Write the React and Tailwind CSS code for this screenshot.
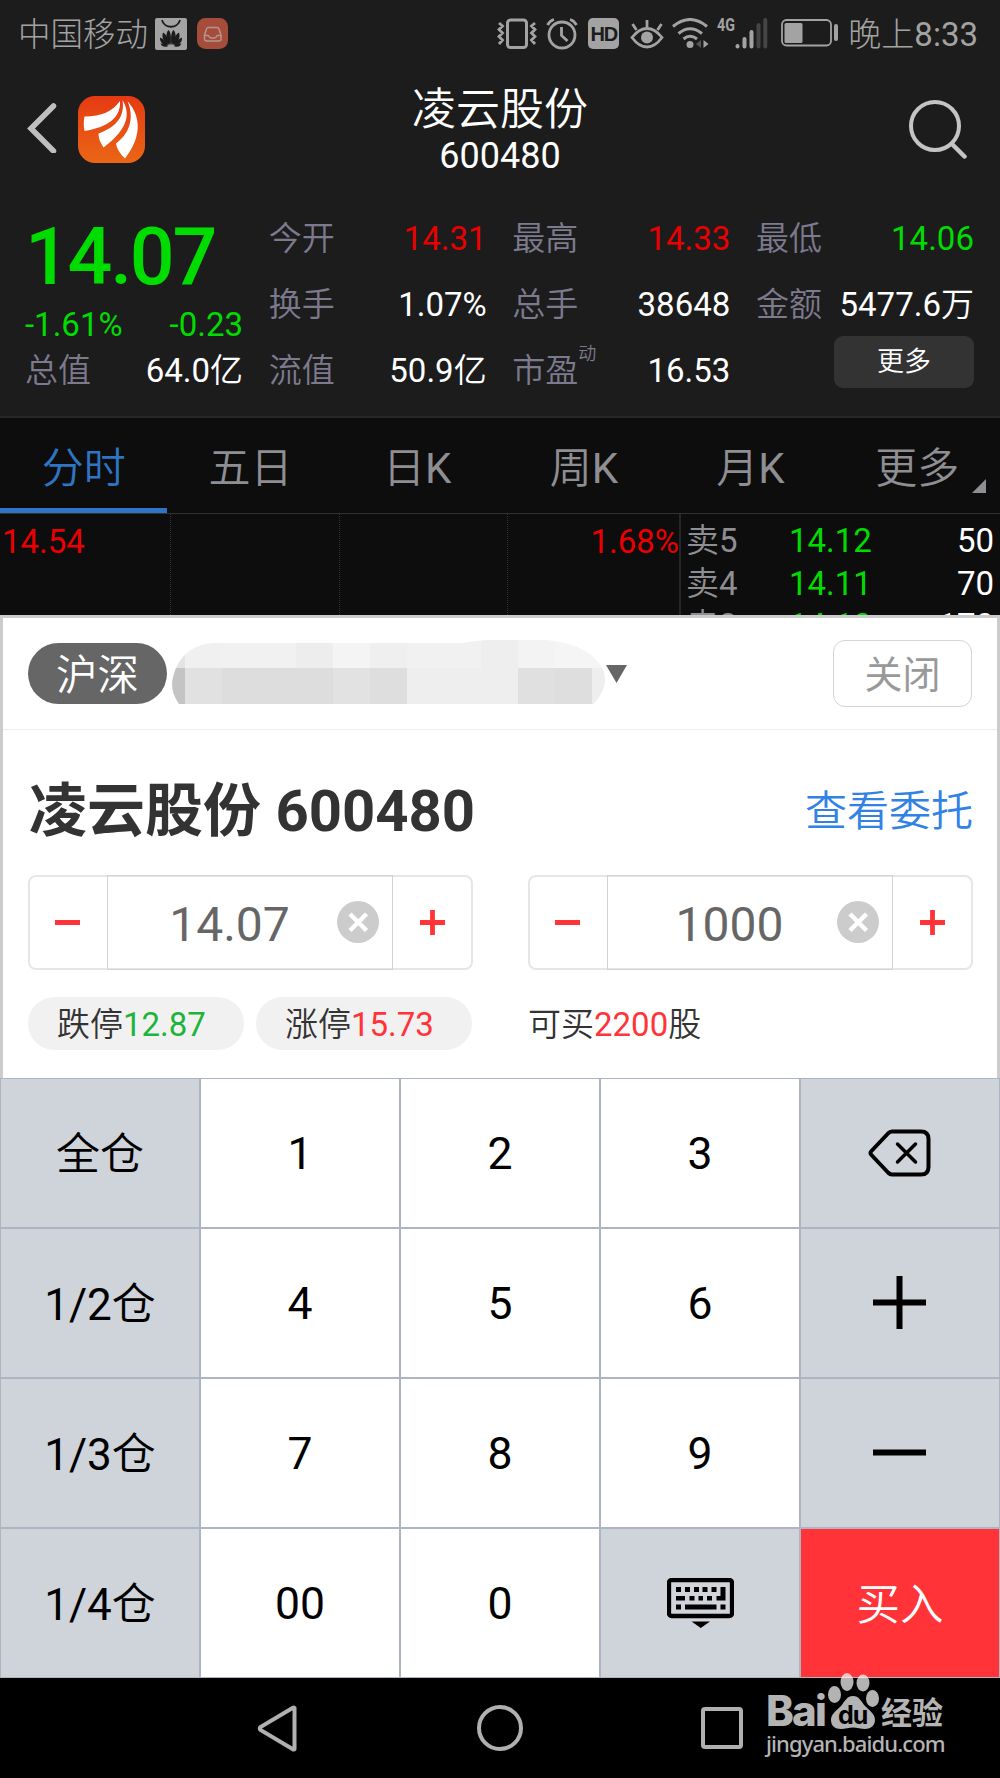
import React, { useState } from 'react';
import clsx from 'clsx';

const tabs = ['分时', '五日', '日K', '周K', '月K', '更多'];

const quoteColumns = [
  [
    { label: '今开', value: '14.31', color: 'text-[#ea0000]' },
    { label: '换手', value: '1.07%', color: 'text-white' },
    { label: '流值', value: '50.9', unit: '亿', color: 'text-white' },
  ],
  [
    { label: '最高', value: '14.33', color: 'text-[#ea0000]' },
    { label: '总手', value: '38648', color: 'text-white' },
    { label: '市盈', sup: '动', value: '16.53', color: 'text-white' },
  ],
  [
    { label: '最低', value: '14.06', color: 'text-[#00dc00]' },
    { label: '金额', value: '5477.6', unit: '万', color: 'text-white' },
  ],
];

const asks = [
  { level: '5', price: '14.12', volume: '50' },
  { level: '4', price: '14.11', volume: '70' },
  { level: '3', price: '14.10', volume: '170' },
];

// Chinese text is set a touch thinner than the digits beside it
const Cn = ({ children }) => <span className="font-[350]">{children}</span>;

const StatusBar = () => (
  <div className="flex h-[66px] items-start justify-between pl-[18px] pr-[22px] pt-[17px] text-[#a3a3a3]">
    <div className="flex items-start">
      <span className="pt-px text-[32.5px] leading-[35px] font-light">中国移动</span>
      <svg width="32" height="32" viewBox="0 0 32 32" className="ml-[7px] mt-px">
        <rect width="32" height="32" rx="2" fill="#a3a3a3" />
        <path d="M7 2 C9 11 23 11 25 2" fill="none" stroke="#1c1c1c" strokeWidth="1.8" />
        <g fill="#1c1c1c">
          <path d="M15.5 27 C10.5 22 10.5 15 13.5 12 C16 14 16.5 21 15.5 27Z" />
          <path d="M16.5 27 C21.5 22 21.5 15 18.5 12 C16 14 15.5 21 16.5 27Z" />
          <path d="M14.5 27 C8 24 6.5 19 8 14.5 C12 17 14 22 14.5 27Z" />
          <path d="M17.5 27 C24 24 25.5 19 24 14.5 C20 17 18 22 17.5 27Z" />
          <path d="M13.5 27.5 C8 27.5 4.5 24 5 19.5 C9 21 12 24 13.5 27.5Z" />
          <path d="M18.5 27.5 C24 27.5 27.5 24 27 19.5 C23 21 20 24 18.5 27.5Z" />
          <path d="M13 28.2 C9 29.5 7 28.5 5.5 25.5 C8.5 25.5 11 26.5 13 28.2Z" />
          <path d="M19 28.2 C23 29.5 25 28.5 26.5 25.5 C23.5 25.5 21 26.5 19 28.2Z" />
        </g>
      </svg>
      <svg width="31" height="31" viewBox="0 0 31 31" className="ml-[10px] mt-px">
        <rect width="31" height="31" rx="8.5" fill="#a54c3b" />
        <path
          d="M11 9.5 H20 Q21.5 9.5 22 11 L24 17 V21 Q24 23 22 23 H9.5 Q7.5 23 7.5 21 V17 L9.5 11 Q10 9.5 11 9.5Z M7.5 17.5 H11.5 Q12.5 20 14 20 H17.5 Q19 20 20 17.5 H24"
          fill="none" stroke="#b3968e" strokeWidth="1.5" strokeLinejoin="round"
        />
      </svg>
    </div>

    <div className="flex items-start">
      {/* vibrate */}
      <svg width="40" height="32" viewBox="0 0 40 32" className="mt-px" fill="none" stroke="#a3a3a3">
        <rect x="10.5" y="2" width="19" height="27.5" rx="3" strokeWidth="3" />
        <path d="M2 5 L5.5 8 L2 11.5 L5.5 15 L2 18.5 L5.5 22 L2 26 M38 5 L34.5 8 L38 11.5 L34.5 15 L38 18.5 L34.5 22 L38 26" strokeWidth="2.8" />
      </svg>
      {/* alarm */}
      <svg width="32" height="32" viewBox="0 0 32 32" className="ml-[9px] mt-px" fill="none" stroke="#a3a3a3" strokeWidth="2.8">
        <circle cx="16" cy="17" r="13" />
        <path d="M1.5 7 Q4 2.5 8 1.5 M30.5 7 Q28 2.5 24 1.5 M15.5 9 V17.5 L21.5 23" />
      </svg>
      <span className="ml-[10px] mt-px flex h-[31px] w-[31px] items-center justify-center rounded-[5px] bg-[#a3a3a3] font-['Liberation_Sans'] text-[20px] leading-none font-bold tracking-[-1px] text-[#1c1c1c]">
        HD
      </span>
      {/* eye comfort */}
      <svg width="34" height="32" viewBox="0 0 34 32" className="ml-[11px] mt-px" fill="none" stroke="#a3a3a3" strokeWidth="2.8">
        <path d="M2 19.5 Q9 10.5 17 10.5 T32 19.5 Q25 29 17 29 T2 19.5Z M17 2 V10 M2.5 6 L6.5 12 M31.5 6 L27.5 12" />
        <circle cx="17" cy="19.5" r="6" fill="#a3a3a3" stroke="none" />
      </svg>
      {/* wifi */}
      <svg width="37" height="32" viewBox="0 0 37 32" className="ml-[8px] mt-px" fill="none" stroke="#a3a3a3" strokeWidth="3">
        <path d="M1 8.500 Q18 -5.500 35 8.500 M6.500 15.500 Q18 6 30 15.500 M11.500 21 Q18 15.500 25 21" />
        <circle cx="18" cy="26.5" r="3.5" fill="#a3a3a3" stroke="none" />
        <path d="M29 22 V30 L24 26Z" fill="#555" stroke="none" />
        <path d="M31.5 22 V30 L36.5 26Z" fill="#a3a3a3" stroke="none" />
      </svg>
      <span className="ml-[8px] font-['Roboto'] text-[19px] leading-[16px] font-bold">
        <span className="inline-block w-[18px] origin-left scale-x-75">4G</span>
      </span>
      <svg width="33" height="32" viewBox="0 0 33 32" className="mt-px" strokeWidth="4" strokeLinecap="round">
        <path d="M2.5 28 V28.5 M9.5 21 V28.5 M16.5 14 V28.5" stroke="#a3a3a3" />
        <path d="M23.5 7 V28.5 M30.3 2 V28.5" stroke="#454545" />
      </svg>
      <svg width="57" height="28" viewBox="0 0 57 28" className="ml-[13px] mt-[2px]">
        <rect x="1" y="1" width="49" height="25.5" rx="4.5" fill="none" stroke="#a3a3a3" strokeWidth="1.8" />
        <rect x="3.5" y="4" width="18" height="20" rx="1.5" fill="#a3a3a3" />
        <rect x="53" y="5" width="4" height="17" rx="2" fill="#a3a3a3" />
      </svg>
      <span className="ml-[10px] text-[33px] leading-[36px] font-light">
        晚上<span className="font-normal">8:33</span>
      </span>
    </div>
  </div>
);

const Header = () => (
  <div className="flex h-[118px] items-start justify-between px-[27px]">
    <div className="flex w-[160px] items-start pt-[30px]">
      <svg width="30" height="50" viewBox="0 0 30 50" className="mt-[7px]">
        <path d="M26.5 3 L4 25.5 L26.5 48" fill="none" stroke="#bfbfbf" strokeWidth="5.5" strokeLinecap="round" />
      </svg>
      <svg width="67" height="67" viewBox="0 0 67 67" className="ml-[21px]">
        <defs>
          <linearGradient id="logo-bg" x1="0" y1="0" x2="0" y2="1">
            <stop offset="0" stopColor="#e63a12" />
            <stop offset="1" stopColor="#ea6615" />
          </linearGradient>
        </defs>
        <rect width="67" height="67" rx="17" fill="url(#logo-bg)" />
        <g fill="#fff">
          <path d="M42 5 C43 21 31 31 6.5 35 Q5 27 6.5 20.5 C24 20 34 16 42 5Z" />
          <path d="M44.5 4 C55 21 45 37 25.5 51.5 Q20 43 20.5 37.5 C39 31 47 20 44.5 4Z" />
          <path d="M49.5 5 C65 23 62 43 47 62.5 Q39 55 38 47.5 C52 37 56.5 22 49.5 5Z" />
        </g>
      </svg>
    </div>
    <div className="flex flex-col items-center gap-[6px] pt-[22px] text-white">
      <h1 className="text-[44px] leading-[44px] font-[350]">凌云股份</h1>
      <p className="text-[36px] leading-[36px]">600480</p>
    </div>
    <div className="flex w-[160px] justify-end pt-[34px] pr-[6px]">
      <svg width="58" height="59" viewBox="0 0 58 59" fill="none" stroke="#c4c4c4" strokeWidth="4">
        <circle cx="26" cy="26" r="24" />
        <path d="M43 44 L55.5 56.5" strokeWidth="4.5" strokeLinecap="round" />
      </svg>
    </div>
  </div>
);

const Quote = () => (
  <div className="flex h-[234px] justify-between border-b-2 border-[#262626] pt-[21px] pr-[26px] pl-[25px] text-[33px] leading-[33px]">
    <div className="flex w-[218px] flex-col pt-px text-[#00dc00]">
      <div className="flex h-[102px] items-center text-[79px] leading-[79px] font-medium tracking-[-2.3px]">14.07</div>
      <div className="flex h-[33px] items-center justify-between">
        <span>-1.61%</span>
        <span>-0.23</span>
      </div>
      <div className="flex h-[59px] items-center justify-between">
        <span className="font-[350] text-[#7d7a8e]">总值</span>
        <span className="text-white">64.0<Cn>亿</Cn></span>
      </div>
    </div>
    {quoteColumns.map((column, index) => (
      <div key={index} className="flex w-[218px] flex-col">
        {column.map((item) => (
          <div key={item.label} className="flex h-[66px] items-center justify-between">
            <span className="flex font-[350] whitespace-nowrap text-[#7d7a8e]">
              {item.label}
              {item.sup && <sup className="top-0 -mt-[10px] text-[18px] leading-[19px]">{item.sup}</sup>}
            </span>
            <span className={clsx('whitespace-nowrap', item.color)}>
              {item.value}
              {item.unit && <Cn>{item.unit}</Cn>}
            </span>
          </div>
        ))}
        {column.length === 2 && (
          <button className="-mt-px h-[52px] w-[140px] self-end rounded-[9px] bg-[#333] pt-px text-[27px] leading-[27px] font-[350] text-white">
            更多
          </button>
        )}
      </div>
    ))}
  </div>
);

const Tabs = () => {
  const [active, setActive] = useState('分时');

  return (
    <div className="grid h-[96px] grid-cols-6 border-b border-[#303030] bg-[#0d0d0d]">
      {tabs.map((tab) => (
        <button
          key={tab}
          onClick={() => setActive(tab)}
          className={clsx(
            'relative border-b-5 pt-[11px] pl-px text-[42px] leading-[76px]',
            active === tab ? 'border-[#2f75c5] text-[#2f75c5]' : 'border-transparent text-[#8e8e93]'
          )}
        >
          <Cn>{tab.replace('K', '')}</Cn>
          {tab.endsWith('K') && 'K'}
          {tab === '更多' && (
            <svg width="14" height="14" viewBox="0 0 14 14" className="absolute right-[14px] bottom-[15px]">
              <path d="M14 0 V14 H0Z" fill="#8e8e93" />
            </svg>
          )}
        </button>
      ))}
    </div>
  );
};

const Chart = () => (
  <div className="flex h-[101px] overflow-hidden bg-[#0d0d0d] text-[33px] leading-[43px]">
    <div className="flex w-[681px] border-r-2 border-[#262626]">
      <div className="w-[171px] border-r border-dotted border-[#333] pt-[6px] pl-[2px] text-[#ea0000]">14.54</div>
      <div className="w-[169px] border-r border-dotted border-[#333]" />
      <div className="w-[168px] border-r border-dotted border-[#333]" />
      <div className="flex-1 pt-[6px] text-right text-[#ea0000]">1.68%</div>
    </div>
    <div className="flex-1 pt-[5px] pr-[6px] pl-[5px]">
      {asks.map((ask) => (
        <div key={ask.level} className="flex h-[42.5px]">
          <span className="w-[103px] text-[#8e8e93]"><Cn>卖</Cn>{ask.level}</span>
          <span className="flex-1 text-[#00dc00]">{ask.price}</span>
          <span className="text-white">{ask.volume}</span>
        </div>
      ))}
    </div>
  </div>
);

// hidden account number
const MaskedAccount = () => (
  <svg width="433" height="67" viewBox="0 0 433 67" className="ml-[5px]">
    <defs>
      <clipPath id="mask-shape">
        <path d="M7 64 Q0 54 0 44 C3 18 20 3 45 3 H290 Q305 0 320 0 H365 C405 0 433 18 433 40 Q432 54 421 64Z" />
      </clipPath>
    </defs>
    <g clipPath="url(#mask-shape)" shapeRendering="crispEdges">
      <rect width="433" height="67" fill="#f1f1f1" />
      <rect width="13" height="28" fill="#e4e4e4" />
      <rect x="13" width="37" height="28" fill="#f0f0f0" />
      <rect x="124" width="37" height="28" fill="#ededed" />
      <rect x="161" width="37" height="28" fill="#f4f4f4" />
      <rect x="198" width="37" height="28" fill="#efefef" />
      <rect x="309" width="37" height="28" fill="#eeeeee" />
      <rect x="346" width="37" height="28" fill="#f3f3f3" />
      <rect x="383" width="50" height="28" fill="#f5f5f5" />
      <rect y="28" width="13" height="37" fill="#c4c4c4" />
      <rect x="13" y="28" width="37" height="37" fill="#e1e1e1" />
      <rect x="50" y="28" width="111" height="37" fill="#dddddd" />
      <rect x="161" y="28" width="37" height="37" fill="#e2e2e2" />
      <rect x="198" y="28" width="37" height="37" fill="#dedede" />
      <rect x="235" y="28" width="111" height="37" fill="#eeeeee" />
      <rect x="346" y="28" width="37" height="37" fill="#e0e0e0" />
      <rect x="383" y="28" width="37" height="37" fill="#dedede" />
      <rect x="420" y="28" width="13" height="37" fill="#eeeeee" />
    </g>
  </svg>
);

const Stepper = ({ value }) => (
  <div className="flex h-[95px] w-[445px] rounded-[8px] border-2 border-[#e6e6e6]">
    <button className="flex w-[77px] items-center justify-center pr-[2px]">
      <svg width="25" height="25" viewBox="0 0 25 25">
        <path d="M0 12.5 H25" stroke="#ff3338" strokeWidth="5" />
      </svg>
    </button>
    <div className="-my-[2px] flex w-[286px] items-center border border-[#d2d2d2] pr-[13px] pb-px pl-[14px]">
      <span className="flex-1 pt-[5px] text-center text-[48px] leading-[48px] text-[#666]">{value}</span>
      <svg width="42" height="42" viewBox="0 0 42 42">
        <circle cx="21" cy="21" r="21" fill="#ccc" />
        <path d="M13 13 L29.5 29.5 M29.5 13 L13 29.5" stroke="#fff" strokeWidth="4.500" />
      </svg>
    </div>
    <button className="flex flex-1 items-center justify-center">
      <svg width="25" height="25" viewBox="0 0 25 25">
        <path d="M0 12.5 H25 M12.5 0 V25" stroke="#ff3338" strokeWidth="4.8" />
      </svg>
    </button>
  </div>
);

const OrderPanel = () => (
  <section className="h-[463px] border-x-3 border-t-3 border-[#ccc] bg-white">
    <div className="flex h-[112px] items-center border-b border-[#eee] px-[25px]">
      <span className="flex h-[61px] w-[139px] items-center justify-center rounded-[31px] bg-[#666] pt-[4px] text-[41.5px] leading-none font-[350] text-white">
        沪深
      </span>
      <MaskedAccount />
      <svg width="21" height="18" viewBox="0 0 21 18" className="ml-px">
        <path d="M0 0 H21 L10.5 18Z" fill="#666" />
      </svg>
      <button className="ml-auto h-[67px] w-[139px] rounded-[12px] border border-[#d4d4d4] pt-[3px] text-[38px] leading-none text-[#999]">
        关闭
      </button>
    </div>
    <div className="flex h-[145px] items-center justify-between pt-[16px] pr-[24px] pl-[26px]">
      <h2 className="text-[58px] leading-[58px] font-bold text-[#333]">凌云股份 600480</h2>
      <span className="pt-[2px] text-[42px] leading-[42px] font-[350] text-[#3282e6]">查看委托</span>
    </div>
    <div className="flex justify-between pr-[24px] pl-[25px]">
      <Stepper value="14.07" />
      <Stepper value="1000" />
    </div>
    <div className="mt-[27px] flex px-[25px] text-[33px] leading-[56px] text-[#333]">
      <span className="h-[53px] w-[216px] rounded-full bg-[#f1f1f1] pl-[29px]">
        <Cn>跌停</Cn><span className="text-[#1eb43c]">12.87</span>
      </span>
      <span className="ml-[12px] h-[53px] w-[216px] rounded-full bg-[#f1f1f1] pl-[29px]">
        <Cn>涨停</Cn><span className="text-[#ff3338]">15.73</span>
      </span>
      <span className="ml-[56px]">
        <Cn>可买</Cn><span className="text-[#ff3338]">2200</span><Cn>股</Cn>
      </span>
    </div>
  </section>
);

const BackspaceIcon = () => (
  <svg width="63" height="48" viewBox="0 0 63 48" className="mr-[2px] mb-px" fill="none" stroke="#000" strokeLinecap="round" strokeLinejoin="round">
    <path d="M24 2.5 H53 Q60.5 2.5 60.5 10 V38 Q60.5 45.5 53 45.5 H24 Q22 45.5 20 43.5 L3 25.5 Q2 24 3 22.5 L20 4.5 Q22 2.5 24 2.5Z" strokeWidth="4" />
    <path d="M29.5 15 L47.5 33 M47.5 15 L29.5 33" strokeWidth="3.5" />
  </svg>
);

const PlusIcon = () => (
  <svg width="53" height="53" viewBox="0 0 53 53" className="mr-[2px] mb-px">
    <path d="M0 26.5 H53 M26.5 0 V53" stroke="#000" strokeWidth="6" />
  </svg>
);

const MinusIcon = () => (
  <svg width="53" height="53" viewBox="0 0 53 53" className="mr-[2px] mb-px">
    <path d="M0 26.5 H53" stroke="#000" strokeWidth="6" />
  </svg>
);

const KeyboardIcon = () => (
  <svg width="67" height="50" viewBox="0 0 67 50">
    <rect x="2" y="2" width="63" height="36" rx="2.5" fill="none" stroke="#000" strokeWidth="4.3" />
    <path d="M9 9h5v5h-5z M18 9h5v5h-5z M27 9h5v5h-5z M35.5 9h5v5h-5z M44.5 9h5v5h-5z M53.5 9h5v13.5h-9v-4.5h4z M9 18h9v4.5h-9z M22.5 18h5v4.5h-5z M31.5 18h4.5v4.5h-4.5z M40 18h5v4.5h-5z M9 26.5h5v5h-5z M18 26.5h31.5v5h-31.5z M53.5 26.5h5v5h-5z M24.5 43.5h18.5l-9.2 6.5z" />
  </svg>
);

const keys = [
  { cn: '全仓', side: true },
  { label: '1' },
  { label: '2' },
  { label: '3' },
  { icon: BackspaceIcon, side: true },
  { label: '1/2', cn: '仓', side: true },
  { label: '4' },
  { label: '5' },
  { label: '6' },
  { icon: PlusIcon, side: true },
  { label: '1/3', cn: '仓', side: true },
  { label: '7' },
  { label: '8' },
  { label: '9' },
  { icon: MinusIcon, side: true },
  { label: '1/4', cn: '仓', side: true },
  { label: '00' },
  { label: '0' },
  { icon: KeyboardIcon, side: true },
  { cn: '买入', buy: true },
];

const Keypad = () => (
  <div className="grid h-[600px] grid-cols-5 grid-rows-4 text-[44px] leading-[45px] text-black">
    {keys.map((key, index) => (
      <button
        key={index}
        className={clsx(
          'flex items-center justify-center border border-[#aeb5c2]',
          key.buy ? 'bg-[#ff3338] text-[43.5px] text-white' : key.side ? 'bg-[#cfd3da]' : 'bg-white'
        )}
      >
        {key.icon ? (
          <key.icon />
        ) : (
          <span className={clsx(key.cn ? 'pt-[4px]' : 'pt-[2px] text-[44.5px]')}>
            {key.label}
            {key.cn && <Cn>{key.cn}</Cn>}
          </span>
        )}
      </button>
    ))}
  </div>
);

const Watermark = () => (
  <div className="absolute top-[1671px] left-[766px] h-[90px] w-[180px] text-[#b4b4b4]">
    <div className="flex items-end">
      <span className="w-[61px] font-['Inter'] text-[42px] leading-[36px] font-extrabold tracking-[-1.8px]">Bai</span>
      <div className="relative h-[58px] w-[52px]">
        <svg width="52" height="58" viewBox="0 0 52 58" fill="#fff" fillOpacity="0.7">
          <ellipse cx="7.500" cy="23.500" rx="6.500" ry="8.500" />
          <ellipse cx="20" cy="11" rx="6.500" ry="9" />
          <ellipse cx="36" cy="12" rx="6.500" ry="8.500" />
          <ellipse cx="45.500" cy="27.500" rx="6.500" ry="8.500" />
          <path d="M26 25 C32 25 34 30 38 35 C43 40 48 43 48 49 C48 55 43 58 38 58 C34 58 30 56.500 26 56.500 C22 56.500 18 58 14 58 C8 58 4 55 4 49 C4 43 9 40 14 35 C18 30 20 25 26 25Z" />
        </svg>
        <span className="absolute top-[32px] left-[11px] font-['Inter'] text-[25px] leading-[24px] font-bold tracking-[-1px] text-black">du</span>
      </div>
      <span className="ml-[2px] text-[31px] leading-[30px] font-bold">经验</span>
    </div>
    <p className="font-['Noto_Sans'] text-[22px] leading-[28px] font-medium tracking-[-0.9px]">jingyan.baidu.com</p>
  </div>
);

const NavBar = () => (
  <div className="flex h-[100px] items-center justify-between bg-black pr-[257px] pl-[257px]">
    <svg width="41" height="47" viewBox="0 0 41 47">
      <path d="M37.5 3 V44 Q37 45 35.5 44 L3.5 25 Q2 23.5 3.5 22 L35.5 3 Q37 2 37.5 3Z" fill="none" stroke="#b0b0b0" strokeWidth="4" />
    </svg>
    <svg width="46" height="46" viewBox="0 0 46 46">
      <circle cx="23" cy="23" r="21" fill="none" stroke="#b0b0b0" strokeWidth="4" />
    </svg>
    <svg width="42" height="42" viewBox="0 0 42 42">
      <rect x="2" y="2" width="38" height="38" rx="2" fill="none" stroke="#b0b0b0" strokeWidth="4" />
    </svg>
  </div>
);

export default function App() {
  return (
    <div className="relative h-[1778px] w-[1000px] overflow-hidden bg-[#1c1c1c] font-['Roboto','Noto_Sans_CJK_SC',sans-serif]">
      <StatusBar />
      <Header />
      <Quote />
      <Tabs />
      <Chart />
      <OrderPanel />
      <Keypad />
      <NavBar />
      <Watermark />
    </div>
  );
}
